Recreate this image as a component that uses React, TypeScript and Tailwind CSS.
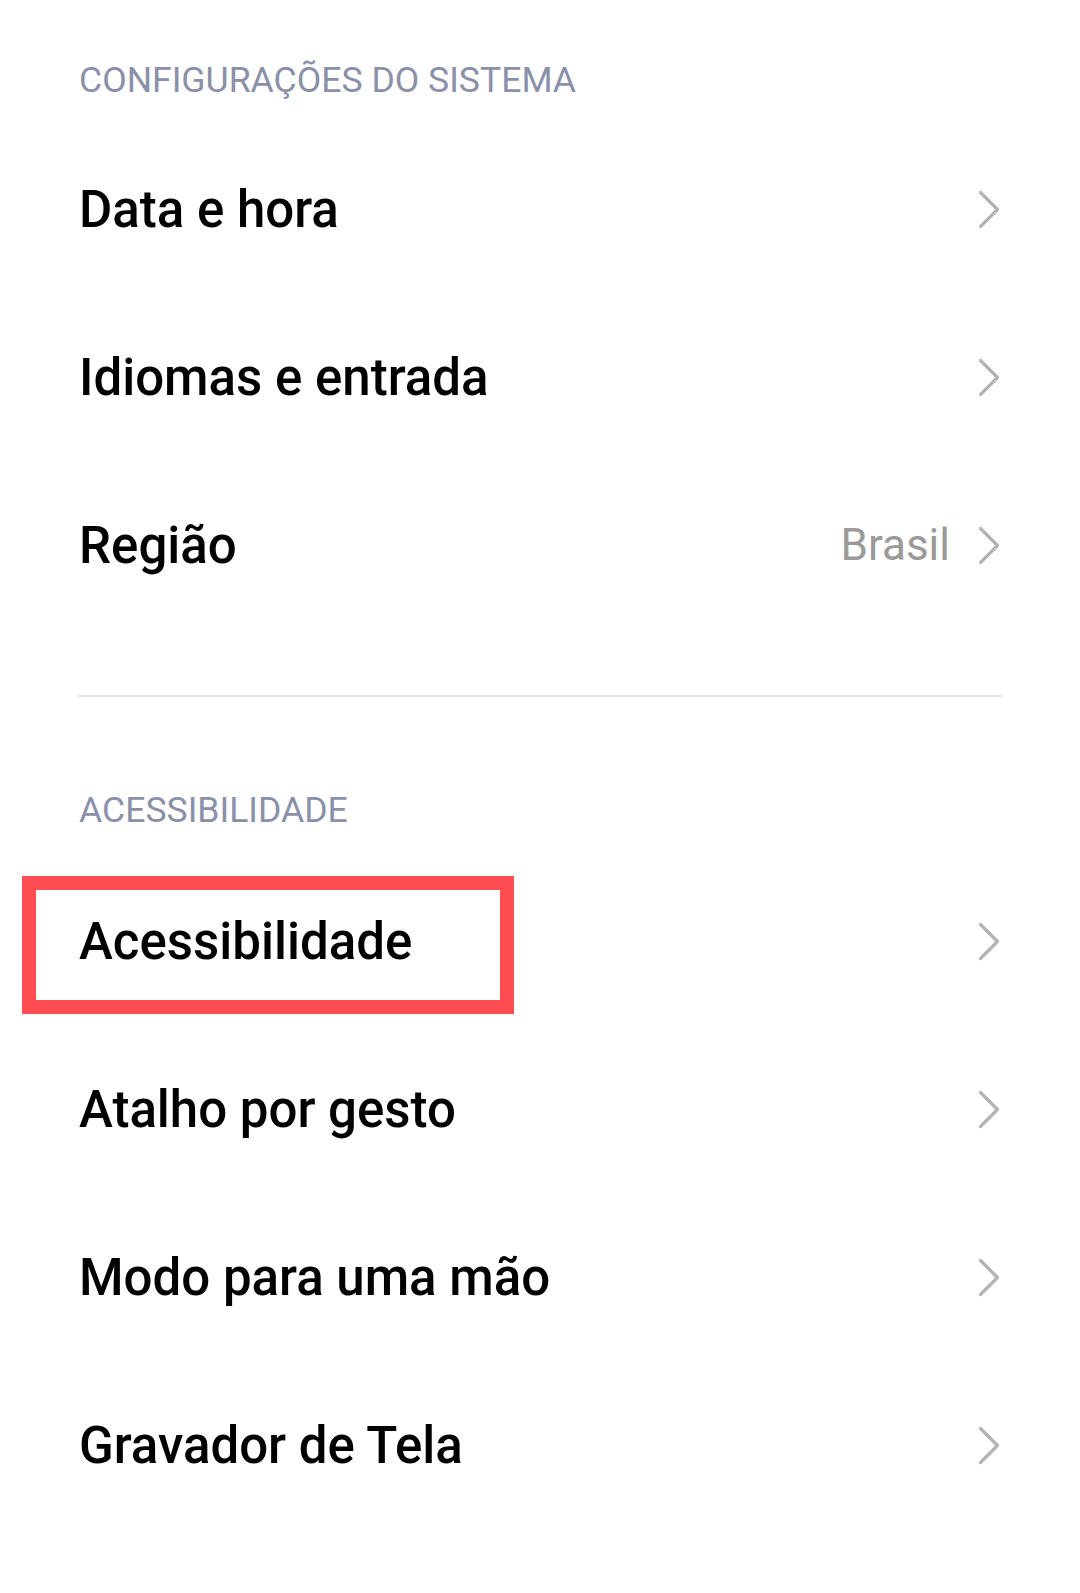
const font = { fontFamily: "Roboto, 'Noto Sans', sans-serif" };

const Chevron = () => (
  <svg width="22" height="39" viewBox="0 0 22 39" className="shrink-0">
    <polyline
      points="2.5,2.5 19.5,19.5 2.5,36.5"
      fill="none"
      stroke="#b3b3b3"
      strokeWidth="3.2"
      strokeLinecap="round"
      strokeLinejoin="round"
    />
  </svg>
);

type Item = { label: string; value?: string; marked?: boolean };

const system: Item[] = [
  { label: "Data e hora" },
  { label: "Idiomas e entrada" },
  { label: "Região", value: "Brasil" },
];

const access: Item[] = [
  { label: "Acessibilidade", marked: true },
  { label: "Atalho por gesto" },
  { label: "Modo para uma mão" },
  { label: "Gravador de Tela" },
];

const Row = ({ item }: { item: Item }) => (
  <div className="relative flex h-[168px] items-center justify-between pl-[79px] pr-[80px]">
    <span className="text-[51px] font-medium leading-none text-black">{item.label}</span>
    <div className="flex items-center gap-[28px]">
      {item.value && <span className="text-[44px] leading-none text-[#9a9a9a]">{item.value}</span>}
      <Chevron />
    </div>
    {item.marked && (
      <div className="absolute left-[22px] top-[19px] h-[138px] w-[492px] border-[14px] border-[#ff4d52]" />
    )}
  </div>
);

const SectionTitle = ({ children }: { children: string }) => (
  <div className="h-[34px] pl-[79px] text-[35.6px] leading-none text-[#8b90a9]">{children}</div>
);

export default function App() {
  return (
    <div className="h-[1593px] w-[1080px] overflow-hidden bg-white pt-[63px]" style={font}>
      <SectionTitle>CONFIGURAÇÕES DO SISTEMA</SectionTitle>
      <div className="mt-[28px]">
        {system.map((item) => (
          <Row key={item.label} item={item} />
        ))}
      </div>
      <div className="mt-[66px] ml-[78px] mr-[78px] h-[2px] bg-[#e6e6e6]" />
      <div className="mt-[96px]">
        <SectionTitle>ACESSIBILIDADE</SectionTitle>
      </div>
      <div className="mt-[30px]">
        {access.map((item) => (
          <Row key={item.label} item={item} />
        ))}
      </div>
    </div>
  );
}
